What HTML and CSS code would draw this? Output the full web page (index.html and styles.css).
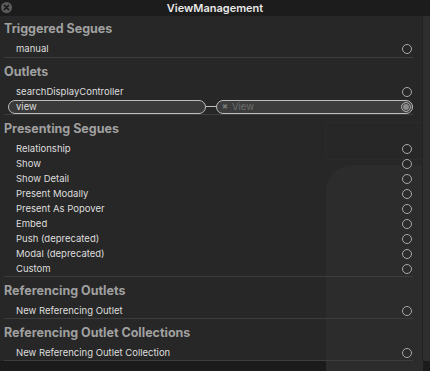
FILE: index.html
```html
<!DOCTYPE html>
<html lang="en">
<head>
  <meta charset="UTF-8" />
  <title>ViewManagement</title>
  <link rel="stylesheet" href="styles.css">
</head>
<body>

  <div class="window">
    <!-- Title bar -->
    <div class="titlebar">
      <span class="close-btn">
        <svg width="11" height="11" viewBox="0 0 11 11">
          <circle cx="5.5" cy="5.5" r="5.5" fill="#5c5c5c"/>
          <path d="M3.4 3.4 L7.6 7.6 M7.6 3.4 L3.4 7.6" stroke="#1c1c1c" stroke-width="1.6" stroke-linecap="round"/>
        </svg>
      </span>
      <span class="title">ViewManagement</span>
    </div>

    <div class="content">
      <div class="backdrop-box"></div>
      <div class="backdrop-shape"></div>

      <div class="panel">
        <div class="section first">
          <div class="section-title">Triggered Segues</div>
          <div class="rows">
            <div class="row"><span class="label">manual</span><i class="dot"></i></div>
          </div>
        </div>

        <div class="section">
          <div class="section-title">Outlets</div>
          <div class="rows">
            <div class="row"><span class="label">searchDisplayController</span><i class="dot"></i></div>
            <div class="row connected">
              <span class="pill">view</span>
              <span class="link"></span>
              <span class="target">
                <span class="x-mark">&#10006;</span>
                <span class="target-name">View</span>
                <i class="dot filled"></i>
              </span>
            </div>
          </div>
        </div>

        <div class="section">
          <div class="section-title">Presenting Segues</div>
          <div class="rows">
            <div class="row"><span class="label">Relationship</span><i class="dot"></i></div>
            <div class="row"><span class="label">Show</span><i class="dot"></i></div>
            <div class="row"><span class="label">Show Detail</span><i class="dot"></i></div>
            <div class="row"><span class="label">Present Modally</span><i class="dot"></i></div>
            <div class="row"><span class="label">Present As Popover</span><i class="dot"></i></div>
            <div class="row"><span class="label">Embed</span><i class="dot"></i></div>
            <div class="row"><span class="label">Push (deprecated)</span><i class="dot"></i></div>
            <div class="row"><span class="label">Modal (deprecated)</span><i class="dot"></i></div>
            <div class="row"><span class="label">Custom</span><i class="dot"></i></div>
          </div>
        </div>

        <div class="section">
          <div class="section-title">Referencing Outlets</div>
          <div class="rows">
            <div class="row"><span class="label">New Referencing Outlet</span><i class="dot"></i></div>
          </div>
        </div>

        <div class="section">
          <div class="section-title">Referencing Outlet Collections</div>
          <div class="rows">
            <div class="row"><span class="label">New Referencing Outlet Collection</span><i class="dot"></i></div>
          </div>
        </div>
      </div>

      <div class="scroll-strip"></div>
    </div>

    <div class="footer-bar"></div>
  </div>

</body>
</html>
```

FILE: styles.css
```css
body {
  margin: 0;
  font-family: "Inter", "Liberation Sans", sans-serif;
  background-color: #1a1a1a;
}

.window {
  width: 430px;
  height: 371px;
  display: flex;
  flex-direction: column;
  overflow: hidden;
}

/* Title bar */
.titlebar {
  height: 16px;
  background-color: #1c1c1c;
  display: flex;
  align-items: center;
  justify-content: center;
  position: relative;
}

.close-btn {
  position: absolute;
  left: 1px;
  top: 2px;
  line-height: 0;
}

.title {
  color: #e8e8e8;
  font-size: 11px;
  font-weight: 600;
}

/* Main area */
.content {
  flex: 1;
  display: flex;
  background-color: #272727;
  position: relative;
}

.backdrop-box {
  position: absolute;
  left: 325px;
  top: 106px;
  width: 98px;
  height: 36px;
  border: 1px solid #2b2b2b;
  border-radius: 4px;
}

.backdrop-shape {
  position: absolute;
  left: 326px;
  top: 149px;
  width: 97px;
  height: 240px;
  background-color: #2c2c2c;
  border-radius: 26px 0 0 0;
}

.panel {
  flex: 1;
  padding-left: 4px;
  padding-right: 9px;
  position: relative;
}

.scroll-strip {
  width: 7px;
  background-color: #2e2e2e;
  border-left: 1px solid #222;
  position: relative;
}

.section {
  border-bottom: 1px solid #3d3d3d;
}

.section-title {
  color: #a0a0a0;
  font-size: 12.5px;
  font-weight: 700;
  line-height: 16px;
  margin-top: 6px;
}

.section.first .section-title {
  margin-top: 5px;
}

.rows {
  padding-top: 4px;
}

.section.first .rows {
  padding-bottom: 1px;
}

.row {
  height: 15px;
  display: flex;
  align-items: center;
  padding-left: 12px;
  color: #dedede;
  font-size: 9.5px;
}

.label {
  flex: 1;
}

.dot {
  width: 10px;
  height: 10px;
  border: 1.3px solid #a8a8a8;
  border-radius: 50%;
  box-sizing: border-box;
  margin-right: 1px;
}

/* Connected outlet */
.row.connected {
  padding-left: 4px;
}

.pill {
  width: 198px;
  height: 14px;
  box-sizing: border-box;
  border: 1px solid #bdbdbd;
  border-radius: 7px;
  background-color: #3a3a3a;
  padding-left: 7px;
  line-height: 12px;
}

.link {
  width: 10px;
  height: 1px;
  background-color: #bdbdbd;
}

.target {
  flex: 1;
  height: 14px;
  box-sizing: border-box;
  border: 1px solid #bdbdbd;
  border-radius: 7px;
  background-color: #3c3c3c;
  display: flex;
  align-items: center;
  padding-left: 5px;
  color: #6e6e6e;
  font-size: 9.5px;
  gap: 4px;
}

.x-mark {
  font-size: 7px;
  color: #7a7a7a;
}

.target-name {
  flex: 1;
}

.target .dot {
  margin-right: 1px;
}

.dot.filled {
  background-color: #8a8a8a;
  box-shadow: inset 0 0 0 1px #3c3c3c;
}

.footer-bar {
  height: 10px;
  background-color: #1b1b1b;
}
```
